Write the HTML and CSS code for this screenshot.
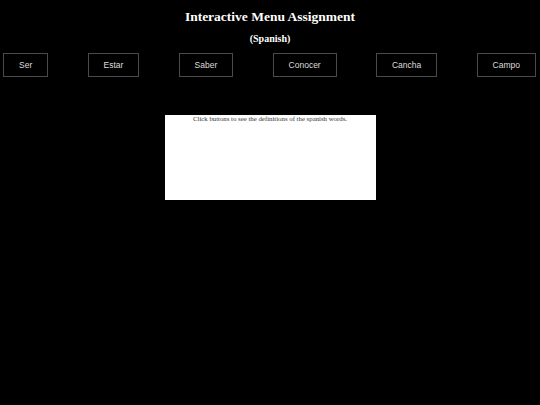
FILE: index.html
```html
<!DOCTYPE html>
<html>
<head>
<meta charset="utf-8">
<link rel="stylesheet" href="styles.css">
</head>
<body>
<h1 class="title">Interactive Menu Assignment</h1>
<h2 class="subtitle">(Spanish)</h2>
<nav class="menu">
  <button class="word">Ser</button>
  <button class="word">Estar</button>
  <button class="word">Saber</button>
  <button class="word">Conocer</button>
  <button class="word">Cancha</button>
  <button class="word">Campo</button>
</nav>
<div class="output">Click buttons to see the definitions of the spanish words.</div>
</body>
</html>
```
FILE: styles.css
```css
html, body {
  background: #000;
}
body {
  margin: 0;
  font-family: "Liberation Serif", serif;
  color: #fff;
}
.title {
  font-size: 13.5px;
  text-align: center;
  margin: 0;
  padding-top: 9px;
  line-height: 16px;
}
.subtitle {
  font-size: 10px;
  text-align: center;
  margin: 0;
  padding-top: 8px;
  line-height: 12px;
}
.menu {
  display: flex;
  justify-content: space-between;
  padding: 0 4px 0 3px;
  margin-top: 8px;
}
.word {
  font-family: "Liberation Sans", Arial, sans-serif;
  font-size: 8.5px;
  color: #ddd;
  background: #000;
  border: 1px solid #4a4a4a;
  height: 24px;
  padding: 0 15px;
  margin: 0;
}
.output {
  width: 211px;
  height: 85px;
  margin: 38px auto 0;
  background: #fff;
  color: #333;
  font-size: 6.8px;
  text-align: center;
  line-height: 8px;
  padding-top: 0;
  box-sizing: border-box;
}
```
